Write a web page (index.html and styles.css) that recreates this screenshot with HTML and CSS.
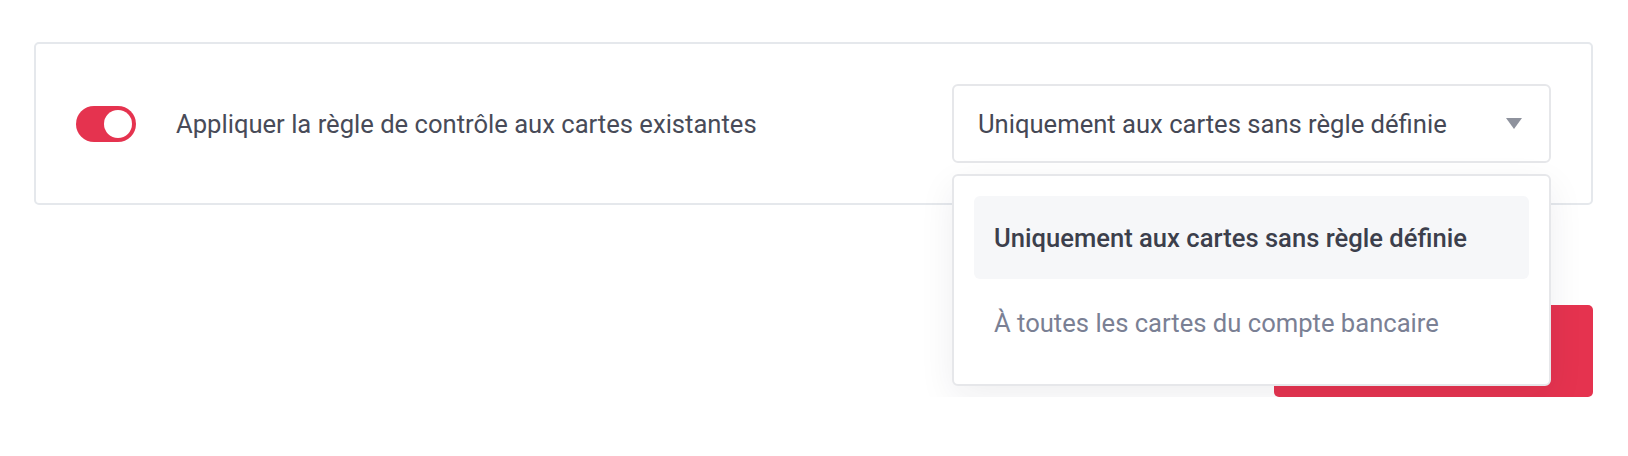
FILE: index.html
```html
<!DOCTYPE html>
<html lang="fr">
<head>
<meta charset="utf-8">
<title>Règle de contrôle</title>
<link rel="stylesheet" href="styles.css">
</head>
<body>
<div class="page">
  <div class="card">
    <div class="toggle-group">
      <div class="toggle"><span class="knob"></span></div>
      <span class="label">Appliquer la règle de contrôle aux cartes existantes</span>
    </div>
    <div class="select-wrap">
      <div class="select">
        <span class="select-value">Uniquement aux cartes sans règle définie</span>
        <svg class="arrow" width="16" height="11" viewBox="0 0 16 11"><polygon points="0,0 16,0 8,11" fill="#8e929d"/></svg>
      </div>
      <div class="dropdown">
        <div class="option active">Uniquement aux cartes sans règle définie</div>
        <div class="option last">À toutes les cartes du compte bancaire</div>
      </div>
    </div>
  </div>
  <div class="actions">
    <button class="btn">Enregistrer</button>
  </div>
</div>
</body>
</html>
```
FILE: styles.css
```css
html, body {
  margin: 0;
  background: #ffffff;
}
body {
  font-family: Roboto, "Liberation Sans", sans-serif;
}
.page {
  padding: 42px 35px 0 34px;
}
.card {
  border: 2px solid #e5e8ec;
  border-radius: 5px;
  padding: 40px;
  display: flex;
  align-items: center;
  justify-content: space-between;
}
.toggle-group {
  display: flex;
  align-items: center;
  gap: 40px;
}
.toggle {
  width: 60px;
  height: 36px;
  box-sizing: border-box;
  padding: 4px;
  border-radius: 18px;
  background: #e5334f;
  display: flex;
  justify-content: flex-end;
}
.knob {
  width: 28px;
  height: 28px;
  border-radius: 50%;
  background: #ffffff;
}
.label {
  font-size: 25.6px;
  color: #484b58;
}
.select-wrap {
  position: relative;
  width: 599px;
}
.select {
  height: 79px;
  box-sizing: border-box;
  border: 2px solid #e6e7ea;
  border-radius: 6px;
  display: flex;
  align-items: center;
  justify-content: space-between;
  padding: 0 27px 0 24px;
}
.select-value {
  font-size: 25.6px;
  color: #454855;
}
.arrow {
  display: block;
}
.dropdown {
  position: absolute;
  top: calc(100% + 11px);
  left: 0;
  right: 0;
  z-index: 2;
  background: #ffffff;
  border: 2px solid #e6e7ea;
  border-radius: 6px;
  padding: 20px;
  box-shadow: 0 12px 36px rgba(30, 35, 50, 0.07);
}
.option {
  height: 83px;
  display: flex;
  align-items: center;
  padding: 0 20px;
  border-radius: 6px;
  font-size: 25.6px;
  color: #7a8094;
}
.option.last {
  height: 85px;
  padding-top: 2px;
  box-sizing: border-box;
}
.option.active {
  background: #f6f7f9;
  color: #3c3f4c;
  font-weight: 500;
}
.actions {
  display: flex;
  justify-content: flex-end;
  margin-top: 100px;
}
.btn {
  width: 319px;
  height: 92px;
  border: none;
  border-radius: 5px;
  background: #e5334f;
  color: #ffffff;
  font-family: Roboto, "Liberation Sans", sans-serif;
  font-size: 25.6px;
  font-weight: 500;
}
```
